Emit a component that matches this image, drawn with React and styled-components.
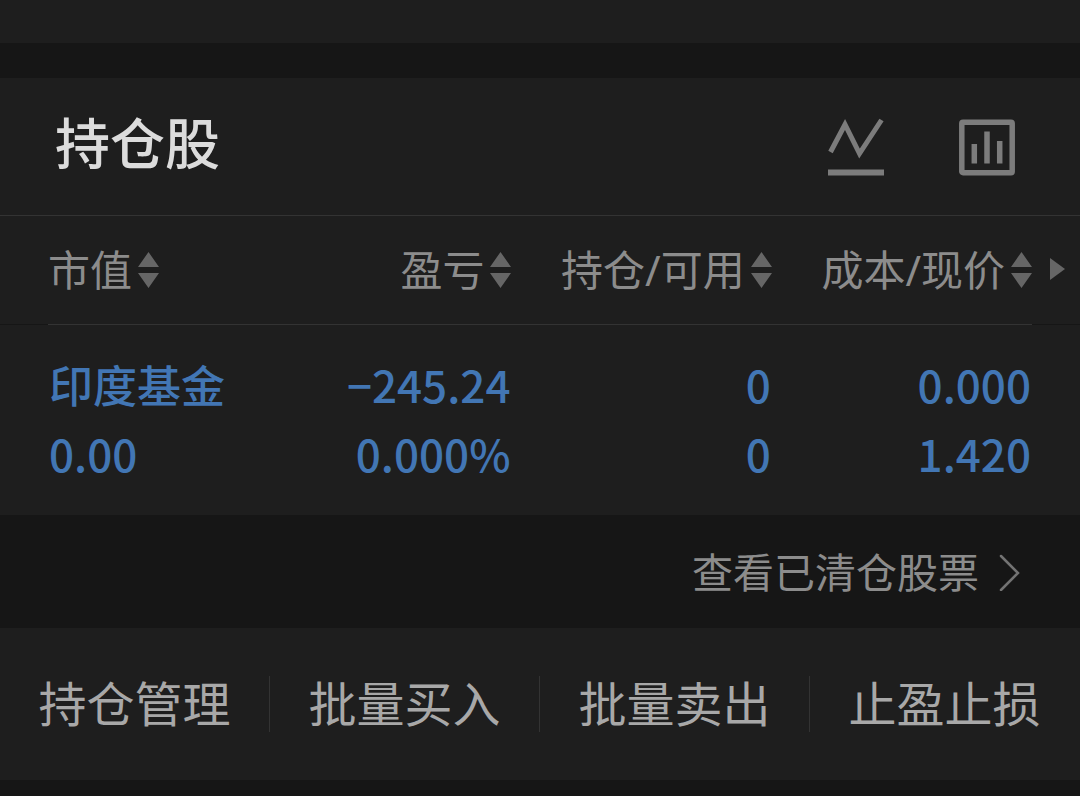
import React from "react";
import styled, { createGlobalStyle } from "styled-components";

const GlobalStyle = createGlobalStyle`
  * { box-sizing: border-box; }
  body {
    margin: 0;
    background: #161616;
    font-family: "Noto Sans", "Noto Sans CJK SC", sans-serif;
    -webkit-font-smoothing: antialiased;
  }
  button {
    margin: 0;
    padding: 0;
    border: 0;
    background: none;
    color: inherit;
    font: inherit;
    cursor: pointer;
  }
  svg { display: block; }
`;

const Page = styled.main`
  display: flex;
  flex-direction: column;
  min-height: 100vh;
  background: #161616;
`;

const PreviousPanel = styled.div`
  height: 43px;
  margin-bottom: 35px;
  background: #1e1e1e;
`;

const Panel = styled.section`
  background: #1e1e1e;
`;

const PanelHeader = styled.header`
  display: flex;
  align-items: center;
  justify-content: space-between;
  padding: 24px 64px 32px 55px;
  border-bottom: 1px solid #333;
`;

const Title = styled.h1`
  margin: 0;
  color: #dcdcdc;
  font-size: 55px;
  line-height: 81px;
  font-weight: 500;
`;

const Tools = styled.div`
  display: flex;
  gap: 73px;
  padding-top: 8px;
  color: #7c7c7c;
`;

const Table = styled.table`
  width: 100%;
  table-layout: fixed;
  border-collapse: separate;
  border-spacing: 0;
`;

const Col = styled.col`
  width: ${({ $width }) => $width};
`;

const HeadCell = styled.th`
  height: 109px;
  padding: 0;
  border-bottom: 1px solid #333;
  color: #8c8c8c;
  font-size: 42px;
  line-height: 60px;
  font-weight: 400;
  text-align: ${({ $first }) => ($first ? "left" : "right")};
`;

const EdgeCell = styled.td`
  padding: 0 0 0 18px;
  border-bottom: 1px solid #161616;
  color: #666;
`;

const SortButton = styled.button`
  display: inline-flex;
  align-items: center;
  gap: 6px;
  white-space: nowrap;

  svg { color: #666; }
`;

const Cell = styled.td`
  padding: 25px 1px 27px;
  color: #4276b4;
  text-align: ${({ $first }) => ($first ? "left" : "right")};
`;

const Value = styled.span`
  display: block;
  font-family: "Noto Sans CJK SC", sans-serif;
  font-size: 44px;
  line-height: 69px;
  font-weight: 500;
  white-space: nowrap;
`;

const ClosedRow = styled.div`
  display: flex;
  justify-content: flex-end;
  padding: 27px 59px 26px 48px;
`;

const ClosedLink = styled.a`
  display: flex;
  align-items: center;
  gap: 20px;
  color: #8c8c8c;
  font-size: 41px;
  line-height: 60px;
  text-decoration: none;
`;

const Actions = styled.nav`
  display: grid;
  grid-template-columns: repeat(4, 1fr);
  padding: 48px 0;
  background: #1e1e1e;
`;

const ActionButton = styled.button`
  && {
    border-right: 1px solid #333;
    color: #a8a8a8;
    font-size: 48px;
    line-height: 56px;
  }
  &&:last-child { border-right-color: transparent; }
`;

const TrendIcon = () => (
  <svg width="58" height="58" viewBox="0 0 58 58" fill="none" stroke="currentColor" strokeWidth="5" aria-hidden="true">
    <path d="M3.5 34 18 6.5 32.5 35.5 54.5 2" />
    <path d="M1 54.5H57" strokeWidth="6" />
  </svg>
);

const ChartIcon = () => (
  <svg width="58" height="58" viewBox="0 0 58 58" fill="none" stroke="currentColor" strokeWidth="5.5" aria-hidden="true">
    <rect x="3.8" y="4.3" width="50.4" height="50.4" rx="1.2" />
    <path d="M16.3 26V45.5M29 13.5V45.5M41.7 23V45.5" />
  </svg>
);

const SortIcon = () => (
  <svg width="21" height="36" viewBox="0 0 21 36" fill="currentColor" aria-hidden="true">
    <path d="M10.5 0 21 15H0ZM0 21H21L10.5 36Z" />
  </svg>
);

const MoreIcon = () => (
  <svg width="16" height="24" viewBox="0 0 16 24" fill="currentColor" aria-hidden="true">
    <path d="M0 2 15 13 0 24Z" />
  </svg>
);

const ChevronIcon = () => (
  <svg width="22" height="38" viewBox="0 0 22 38" fill="none" stroke="#737373" strokeWidth="2.5" strokeLinecap="round" aria-hidden="true">
    <path d="M2 3 19 20 2 37" />
  </svg>
);

const columns = ["市值", "盈亏", "持仓/可用", "成本/现价"];
const holding = {
  name: "印度基金",
  marketValue: "0.00",
  figures: [
    ["−245.24", "0.000%"],
    ["0", "0"],
    ["0.000", "1.420"],
  ],
};
const actions = ["持仓管理", "批量买入", "批量卖出", "止盈止损"];

export default function App() {
  return (
    <Page lang="zh-CN">
      <GlobalStyle />
      <PreviousPanel />
      <Panel>
        <PanelHeader>
          <Title>持仓股</Title>
          <Tools>
            <button type="button" aria-label="走势"><TrendIcon /></button>
            <button type="button" aria-label="图表"><ChartIcon /></button>
          </Tools>
        </PanelHeader>
        <Table>
          <colgroup>
            <Col $width="48px" />
            <Col $width="auto" />
            <Col $width="24.1%" />
            <Col $width="24.1%" />
            <Col $width="24.1%" />
            <Col $width="48px" />
          </colgroup>
          <thead>
            <tr>
              <EdgeCell />
              {columns.map((label, i) => (
                <HeadCell key={label} scope="col" $first={i === 0}>
                  <SortButton type="button">{label}<SortIcon /></SortButton>
                </HeadCell>
              ))}
              <EdgeCell>
                <button type="button" aria-label="更多"><MoreIcon /></button>
              </EdgeCell>
            </tr>
          </thead>
          <tbody>
            <tr>
              <td />
              <Cell $first>
                <Value>{holding.name}</Value>
                <Value>{holding.marketValue}</Value>
              </Cell>
              {holding.figures.map(([top, bottom], i) => (
                <Cell key={i}>
                  <Value>{top}</Value>
                  <Value>{bottom}</Value>
                </Cell>
              ))}
              <td />
            </tr>
          </tbody>
        </Table>
      </Panel>
      <ClosedRow>
        <ClosedLink href="#closed">查看已清仓股票<ChevronIcon /></ClosedLink>
      </ClosedRow>
      <Actions>
        {actions.map((label) => (
          <ActionButton key={label} type="button">{label}</ActionButton>
        ))}
      </Actions>
    </Page>
  );
}
